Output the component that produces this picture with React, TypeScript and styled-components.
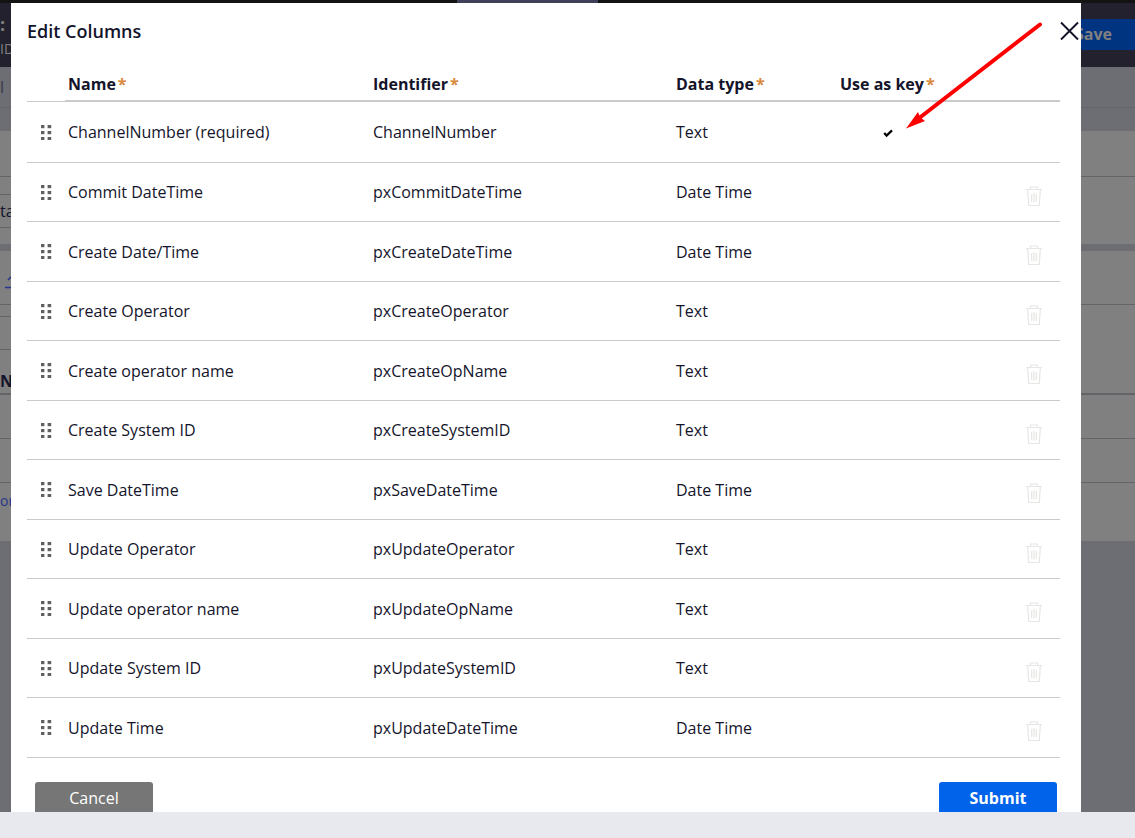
import React from "react";
import styled, { createGlobalStyle, css } from "styled-components";

const GlobalStyle = createGlobalStyle`
  *, *::before, *::after { box-sizing: border-box; }
  html, body { margin: 0; padding: 0; }
  body {
    font-family: "Open Sans", "Noto Sans", sans-serif;
    font-size: 16px;
    line-height: 22px;
    color: #14142b;
    background: #e8e9ee;
  }
`;

const Shell = styled.div`
  display: flex;
  flex-direction: column;
  height: 100vh;
  overflow: hidden;
`;

const TabStrip = styled.div`
  display: flex;
  flex: none;
  height: 3px;
  padding-left: 457px;
  background: #131313;
`;

const ActiveTab = styled.div`
  width: 141px;
  background: #40405a;
`;

const Stage = styled.div`
  position: relative;
  flex: 1;
  min-height: 0;
  overflow: hidden;
  background: #6d6e73;
`;

const Footer = styled.footer`
  flex: none;
  height: 26px;
  background: #e8e9ee;
`;

/* Dimmed page behind the dialog */

const RecordHeader = styled.header`
  display: flex;
  justify-content: space-between;
  align-items: flex-start;
  height: 64px;
  background: #22212d;
`;

const RecordTitle = styled.div`
  padding-top: 10px;
  color: #808080;
`;

const TitleLine = styled.div<{ $strong?: boolean }>`
  height: 24px;
  line-height: ${(p) => (p.$strong ? 22 : 24)}px;
  font-size: ${(p) => (p.$strong ? 18 : 14)}px;
  font-weight: ${(p) => (p.$strong ? 700 : 400)};
`;

const SaveButton = styled.button`
  height: 31px;
  margin-top: 16px;
  padding: 0 23px 2px;
  border: 0;
  font: inherit;
  font-weight: 700;
  color: #808080;
  background: #003380;
`;

const Band = styled.div<{ $h: number; $tone?: "gray"; $line?: number }>`
  display: flex;
  align-items: center;
  height: ${(p) => p.$h}px;
  background: ${(p) => (p.$tone ? "#6d6e73" : "#808080")};
  border-bottom: ${(p) => p.$line ?? 0}px solid #646468;
`;

const Field = styled.div`
  display: flex;
  align-items: center;
  width: 300px;
  height: 34px;
  border: 1px solid #646468;
  border-left: 0;
`;

const Crumb = styled.span`
  color: #37374a;
`;

const Clip = styled.span`
  display: flex;
  padding: 8px 0 0 5px;
`;

const ColumnHead = styled.strong`
  padding-top: 8px;
  color: #14142b;
`;

const PageLink = styled.a`
  font-size: 14px;
  color: #26368c;
  text-decoration: none;
`;

/* Dialog */

const Overlay = styled.div`
  position: absolute;
  inset: 0;
  display: flex;
  padding: 0 54px 0 11px;
`;

const Dialog = styled.section`
  flex: 1;
  min-width: 0;
  padding: 0 1px 0 16px;
  background: #fff;
  overflow: hidden;
`;

const DialogHeader = styled.header`
  display: flex;
  justify-content: space-between;
  align-items: center;
  height: 57px;
  padding-bottom: 2px;
`;

const Title = styled.h1`
  margin: 0;
  font-size: 18px;
  line-height: 24px;
  font-weight: 600;
`;

const IconButton = styled.button`
  display: inline-flex;
  padding: 0;
  border: 0;
  background: none;
  color: inherit;
  cursor: pointer;
`;

const DialogBody = styled.div`
  padding-right: 20px;
`;

const Table = styled.table`
  width: 100%;
  table-layout: fixed;
  border-collapse: separate;
  border-spacing: 0;
`;

const Col = styled.col<{ $w?: number }>`
  ${(p) => p.$w && css`width: ${p.$w}px;`}
`;

const HeadCell = styled.th`
  height: 42px;
  padding: 8px 3px 0;
  text-align: left;
  vertical-align: middle;
  font-weight: 700;
  border-bottom: 2px solid #cacaca;
  &:first-child { border-bottom-width: 1px; }
`;

const Required = styled.span`
  margin-left: 2px;
  color: #d8893b;
`;

const Row = styled.tr`
  height: 60px;
  &:nth-child(even) { height: 59px; }
  &:first-child { height: 61px; }
`;

const Cell = styled.td`
  padding: 0 3px;
  vertical-align: middle;
  white-space: nowrap;
  border-bottom: 1px solid #cacaca;
`;

const HandleCell = styled(Cell)`
  padding: 0 0 0 14px;
`;

const KeyCell = styled(Cell)`
  padding: 2px 0 0 46px;
`;

const ActionCell = styled(Cell)`
  padding: 6px 17px 0 0;
  text-align: right;
`;

const Actions = styled.footer`
  display: flex;
  justify-content: space-between;
  padding: 24px 3px 0 8px;
`;

const ActionButton = styled.button<{ $primary?: boolean }>`
  width: 118px;
  height: 34px;
  padding: 0 0 2px;
  border: 0;
  border-radius: 3px;
  font: inherit;
  font-weight: ${(p) => (p.$primary ? 700 : 400)};
  color: #fff;
  background: ${(p) => (p.$primary ? "#0063ea" : "#767676")};
  cursor: pointer;
`;

const Arrow = styled.svg`
  position: absolute;
  top: 17px;
  right: 89px;
  pointer-events: none;
`;

const Block = styled.svg`
  display: block;
`;

const CloseIcon = () => (
  <Block width="20" height="20" viewBox="0 0 20 20" fill="none" stroke="#14142b" strokeWidth="1.9">
    <path d="M1 1.5 18 18.5M18 1.5 1 18.5" />
  </Block>
);

const HandleIcon = () => (
  <Block width="11" height="15" viewBox="0 0 11 15" fill="#606060">
    {[0, 6, 12].map((y) => (
      <React.Fragment key={y}>
        <rect x="0" y={y} width="3.4" height="3.2" />
        <rect x="6.6" y={y} width="3.6" height="3.2" />
      </React.Fragment>
    ))}
  </Block>
);

const CheckIcon = () => (
  <Block width="10" height="9" viewBox="0 0 10 9" fill="none" stroke="#000" strokeWidth="2.2">
    <path d="M1.2 4 3.6 6.6 9 1.4" />
  </Block>
);

const TrashIcon = () => (
  <Block width="18" height="21" viewBox="0 0 18 21" fill="none" stroke="#e6e6e4" strokeWidth="1.2">
    <path d="M1 3.5H17M5.5 3V1H12.5V3M2.7 4 3.7 19.5H14.3L15.3 4" />
    <path d="M6.7 8V16M9 7V16.5M11.3 8V16" />
  </Block>
);

const UploadIcon = () => (
  <Block width="18" height="16" viewBox="0 0 18 16" fill="none" stroke="#26368c" strokeWidth="1.6">
    <path d="M0 13.5H16M3 6 8 1 13 6M8 1V11" />
  </Block>
);

const columns = [
  { name: "ChannelNumber (required)", id: "ChannelNumber", type: "Text", key: true },
  { name: "Commit DateTime", id: "pxCommitDateTime", type: "Date Time" },
  { name: "Create Date/Time", id: "pxCreateDateTime", type: "Date Time" },
  { name: "Create Operator", id: "pxCreateOperator", type: "Text" },
  { name: "Create operator name", id: "pxCreateOpName", type: "Text" },
  { name: "Create System ID", id: "pxCreateSystemID", type: "Text" },
  { name: "Save DateTime", id: "pxSaveDateTime", type: "Date Time" },
  { name: "Update Operator", id: "pxUpdateOperator", type: "Text" },
  { name: "Update operator name", id: "pxUpdateOpName", type: "Text" },
  { name: "Update System ID", id: "pxUpdateSystemID", type: "Text" },
  { name: "Update Time", id: "pxUpdateDateTime", type: "Date Time" },
];

const headings = ["Name", "Identifier", "Data type", "Use as key"];

const TrashButton = styled(IconButton)`
  vertical-align: middle;
`;

export default function App() {
  return (
    <>
      <GlobalStyle />
      <Shell>
        <TabStrip>
          <ActiveTab />
        </TabStrip>
        <Stage>
          <RecordHeader>
            <RecordTitle>
              <TitleLine $strong>:</TitleLine>
              <TitleLine>ID</TitleLine>
            </RecordTitle>
            <SaveButton type="button">Save</SaveButton>
          </RecordHeader>
          <Band $h={41} $tone="gray" $line={1}><Crumb>l</Crumb></Band>
          <Band $h={23} $tone="gray" />
          <Band $h={46} $line={1} />
          <Band $h={67}><Field>tan</Field></Band>
          <Band $h={7} $tone="gray" />
          <Band $h={54} $line={1}>
            <Clip><UploadIcon /></Clip>
          </Band>
          <Band $h={56}><Field /></Band>
          <Band $h={34} $line={2}><ColumnHead>Nu</ColumnHead></Band>
          <Band $h={44} $line={1} />
          <Band $h={44} $line={1} />
          <Band $h={36}><PageLink href="#records">ord</PageLink></Band>
          <Band $h={22} />

          <Overlay>
            <Dialog role="dialog" aria-labelledby="dialog-title">
              <DialogHeader>
                <Title id="dialog-title">Edit Columns</Title>
                <IconButton type="button" aria-label="Close"><CloseIcon /></IconButton>
              </DialogHeader>
              <DialogBody>
                <Table>
                  <colgroup>
                    <Col $w={38} />
                    <Col $w={305} />
                    <Col $w={303} />
                    <Col $w={164} />
                    <Col />
                    <Col $w={60} />
                  </colgroup>
                  <thead>
                    <tr>
                      <HeadCell />
                      {headings.map((h) => (
                        <HeadCell key={h} scope="col">{h}<Required>*</Required></HeadCell>
                      ))}
                      <HeadCell />
                    </tr>
                  </thead>
                  <tbody>
                    {columns.map((c) => (
                      <Row key={c.id}>
                        <HandleCell><HandleIcon /></HandleCell>
                        <Cell>{c.name}</Cell>
                        <Cell>{c.id}</Cell>
                        <Cell>{c.type}</Cell>
                        <KeyCell>{c.key && <CheckIcon />}</KeyCell>
                        <ActionCell>
                          {!c.key && (
                            <TrashButton type="button" aria-label={`Delete ${c.name}`}><TrashIcon /></TrashButton>
                          )}
                        </ActionCell>
                      </Row>
                    ))}
                  </tbody>
                </Table>
                <Actions>
                  <ActionButton type="button">Cancel</ActionButton>
                  <ActionButton type="button" $primary>Submit</ActionButton>
                </Actions>
              </DialogBody>
            </Dialog>
          </Overlay>
          <Arrow width="140" height="112" viewBox="906 20 140 112">
            <path d="M1040 24.5 918 119" stroke="#fe0000" strokeWidth="4" strokeLinecap="round" />
            <path d="M906 128.5 918 112 920 117 925 121Z" fill="#fe0000" />
          </Arrow>
        </Stage>
        <Footer />
      </Shell>
    </>
  );
}
